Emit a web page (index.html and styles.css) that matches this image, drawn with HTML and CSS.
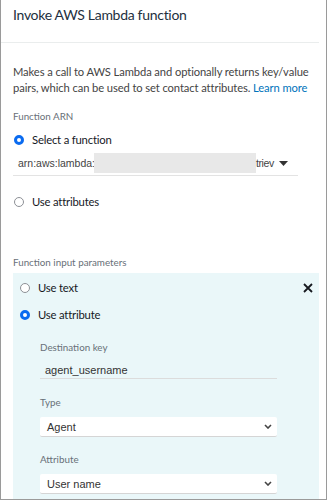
FILE: index.html
```html
<!DOCTYPE html>
<html>
<head>
  <title>Invoke AWS Lambda function</title>
  <link rel="stylesheet" href="styles.css">
</head>
<body>
<div class="frame">
  <h1 class="title">Invoke AWS Lambda function</h1>

  <div class="content">
    <p class="desc">Makes a call to AWS Lambda and optionally returns key/value pairs, which can be used to set contact attributes. <a href="#">Learn more</a></p>

    <div class="label arn-label">Function ARN</div>
    <label class="radio"><span class="dot on"></span>Select a function</label>
    <div class="arn-field">
      <span class="arn-text">arn:aws:lambda:</span><span class="arn-blur"></span><span class="arn-tail">triev</span>
      <svg class="caret" width="9" height="5" viewBox="0 0 9 5"><path d="M0 0h9L4.5 5z" fill="#333"/></svg>
    </div>
    <label class="radio attrs"><span class="dot"></span>Use attributes</label>

    <div class="label params-label">Function input parameters</div>
    <div class="panel">
      <div class="panel-top">
        <label class="radio"><span class="dot"></span>Use text</label>
        <svg class="close" width="10" height="10" viewBox="0 0 10 10"><path d="M1 1l8 8M9 1l-8 8" stroke="#16191f" stroke-width="1.8"/></svg>
      </div>
      <label class="radio use-attr"><span class="dot on"></span>Use attribute</label>

      <div class="fields">
        <div class="label">Destination key</div>
        <div class="text-field">agent_username</div>

        <div class="label">Type</div>
        <div class="select">Agent<svg width="8" height="5" viewBox="0 0 8 5"><path d="M1 1l3 3 3-3" stroke="#444" stroke-width="1.6" fill="none"/></svg></div>

        <div class="label">Attribute</div>
        <div class="select">User name<svg width="8" height="5" viewBox="0 0 8 5"><path d="M1 1l3 3 3-3" stroke="#444" stroke-width="1.6" fill="none"/></svg></div>
      </div>
    </div>
  </div>
</div>
</body>
</html>
```

FILE: styles.css
```css
html, body {
  margin: 0;
  padding: 0;
  background: #fff;
}
body {
  font-family: Lato, "Noto Sans", sans-serif;
  color: #16191f;
}
.frame {
  width: 327px;
  height: 500px;
  box-sizing: border-box;
  border-left: 1px solid #9a9a9a;
  border-right: 1px solid #9a9a9a;
  border-bottom: 1px solid #9a9a9a;
  overflow: hidden;
}
.title {
  margin: 0;
  width: 318px;
  height: 43px;
  box-sizing: border-box;
  padding: 5px 0 0 12px;
  font-size: 14px;
  letter-spacing: -0.3px;
  font-weight: normal;
  line-height: 20px;
  color: #232f3e;
  border-bottom: 1px solid #eaeded;
}
.content {
  padding: 21px 0 0 12px;
  width: 318px;
  box-sizing: border-box;
}
.desc {
  margin: 0 -4px 0 0;
  font-size: 11.2px;
  letter-spacing: -0.1px;
  line-height: 16px;
  color: #444;
}
.desc a {
  color: #0073bb;
  text-decoration: none;
}
.label {
  font-size: 9.8px;
  line-height: 14px;
  color: #687078;
}
.arn-label {
  margin-top: 13px;
}
.radio {
  display: flex;
  align-items: center;
  font-size: 11.3px;
  letter-spacing: -0.2px;
  line-height: 16px;
  color: #16191f;
}
.radio .dot {
  width: 10px;
  height: 10px;
  border: 1px solid #8d9096;
  border-radius: 50%;
  box-sizing: border-box;
  margin: 0 8px 0 0;
  background: #fff;
}
.radio .dot.on {
  border: 3px solid #0a6bf0;
}
.arn-label + .radio {
  margin-top: 9px;
  padding-left: 1px;
}
.arn-field {
  margin-top: 3px;
  width: 285px;
  height: 24px;
  display: flex;
  align-items: center;
  border-bottom: 1px solid #e3e3e3;
  font-family: "Liberation Sans", Arial, sans-serif;
  font-size: 10.5px;
  color: #444;
}
.arn-text {
  padding-left: 5px;
  width: 76px;
  overflow: hidden;
  white-space: nowrap;
}
.arn-blur {
  width: 162px;
  height: 20px;
  background: #e8e8e8;
}
.arn-tail {
  width: 18px;
  letter-spacing: -0.4px;
  white-space: nowrap;
}
.caret {
  margin-left: 5px;
}
.attrs {
  margin-top: 18px;
  padding-left: 1px;
}
.params-label {
  margin-top: 45px;
}
.panel {
  margin-top: 4px;
  background: #eaf7f9;
  padding: 7px 0 20px 0;
  height: 240px;
}
.panel-top {
  display: flex;
  justify-content: space-between;
  align-items: center;
  padding: 0 6px 0 7px;
}
.use-attr {
  margin-top: 11px;
  padding-left: 7px;
}
.fields {
  padding: 17px 0 0 27px;
  width: 264px;
}
.fields .label {
  margin-bottom: 7px;
}
.text-field {
  font-family: "Liberation Sans", Arial, sans-serif;
  font-size: 11px;
  line-height: 13px;
  color: #333;
  padding: 3px 0 1px 5px;
  border-bottom: 1px solid #dcdcdc;
  width: 232px;
  margin-bottom: 16px;
}
.fields .text-field + .label,
.fields .select + .label {
  margin-bottom: 8px;
}
.select {
  display: flex;
  justify-content: space-between;
  align-items: center;
  width: 237px;
  height: 20px;
  box-sizing: border-box;
  padding: 0 5px 0 7px;
  background: #fff;
  border-radius: 2px;
  border-bottom: 1px solid #d5d5d5;
  font-family: "Liberation Sans", Arial, sans-serif;
  font-size: 11px;
  color: #333;
  margin-bottom: 15px;
}
```
